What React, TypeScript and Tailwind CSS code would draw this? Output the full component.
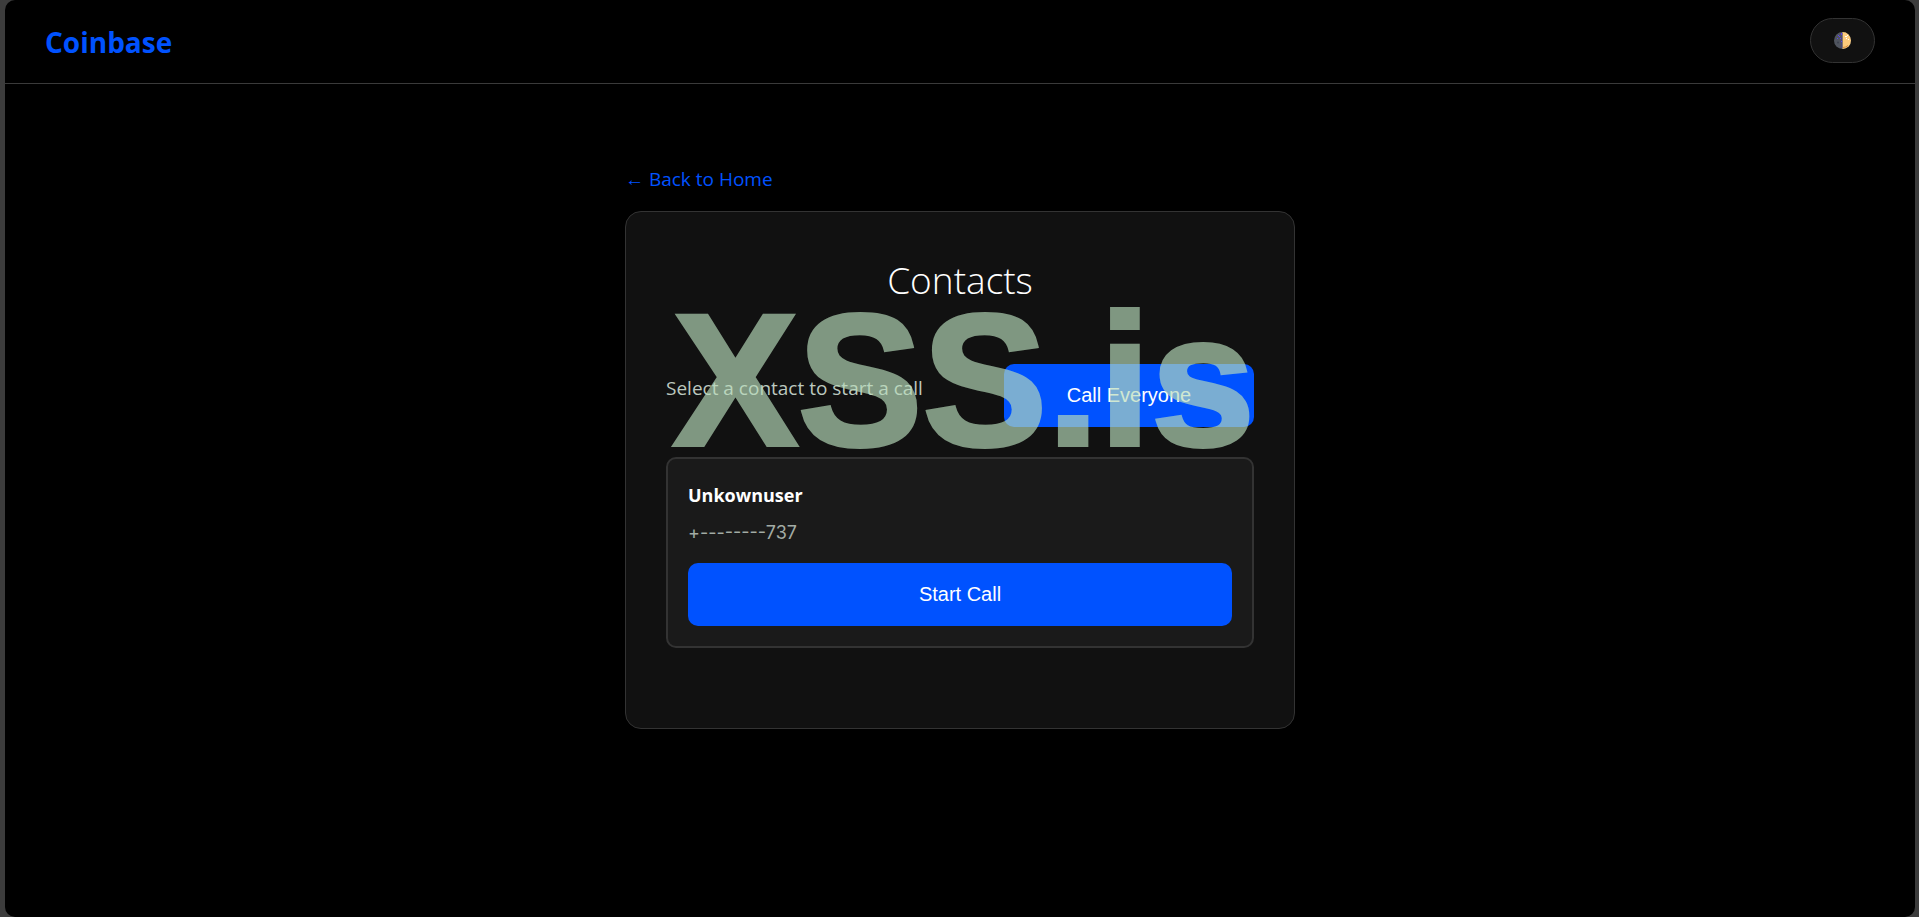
import { useState } from 'react'

type Contact = {
  id: number
  name: string
  phone: string
}

const contacts: Contact[] = [
  { id: 1, name: 'Unkownuser', phone: '+--------737' }
]

const buttonClass =
  "h-[63px] rounded-[10px] bg-[#0052ff] pb-0.5 font-['Liberation_Sans',sans-serif] text-xl text-white hover:bg-[#0045d8] cursor-pointer"

function HalfMoon() {
  return (
    <svg width="17" height="17" viewBox="0 0 17 17" aria-hidden="true">
      <circle cx="8.5" cy="8.5" r="8.5" fill="#50555f" />
      <path d="M8.5 0a8.5 8.5 0 0 1 0 17z" fill="#fdcb7b" />
      <path d="M6.5 1h2v15h-2z" fill="#4a4a7c" opacity="0.7" />
      <path d="M7 1h1v2H7zM5 4h1v1H5zM3 6h1v1H3zM6 6h1v1H6zM7 9h1v1H7zM4 3h1v1H4z" fill="#5a3ff0" />
      <circle cx="4" cy="10.5" r="1" fill="#3d4250" />
      <path d="M11 4h2v1h-2zM12 6h1v1h-1zM14 7h1v1h-1zM13 3h1v1h-1z" fill="#ffffff" />
      <path d="M9 15.500a7.500 7.500 0 0 0 5-2" stroke="#d98d3c" fill="none" />
    </svg>
  )
}

function Header({ onToggle }: { onToggle: () => void }) {
  return (
    <header className="flex h-[84px] items-center justify-between border-b border-[#3a3a3a] px-10 pb-0.5">
      <a href="#" className="pt-0.5 text-[28px] leading-10 font-bold text-[#0052ff]">
        Coinbase
      </a>
      <button
        type="button"
        aria-label="Toggle theme"
        onClick={onToggle}
        className="flex h-[45px] w-[65px] cursor-pointer items-center justify-center rounded-full border border-[#333] bg-[#111]"
      >
        <HalfMoon />
      </button>
    </header>
  )
}

function ContactCard({ contact }: { contact: Contact }) {
  return (
    <li className="rounded-[10px] border-2 border-[#333] bg-[#1a1a1a] p-5">
      <h2 className="text-lg leading-8 font-bold">{contact.name}</h2>
      <p className="mt-1.5 font-['Inter',sans-serif] text-lg leading-8 text-[#a3aca5]">{contact.phone}</p>
      <button type="button" className={`mt-3.5 w-full ${buttonClass}`}>
        Start Call
      </button>
    </li>
  )
}

export default function App() {
  const [, setDark] = useState(true)

  return (
    <div className="min-h-screen bg-[#3c3c3c] pr-1 pl-[5px] font-['Open_Sans','Noto_Sans',sans-serif] text-white">
      <div className="min-h-screen rounded-[10px] bg-black">
        <Header onToggle={() => setDark((d) => !d)} />

        <main className="mx-auto max-w-[672px] px-px pt-[79px] pb-10">
          <a href="#" className="block text-[19px] leading-8 text-[#0052ff]">
            ← Back to Home
          </a>

          <section className="relative mt-4 rounded-2xl border border-[#333] bg-[#111] px-10 pt-10 pb-20">
            <h1 className="text-center text-[37px] leading-[56px] font-light">Contacts</h1>

            <div className="mt-14 flex items-start justify-between">
              <p className="mt-2 text-[19px] leading-8 text-[#bcc8bf]">Select a contact to start a call</p>
              <button type="button" className={`w-[250px] ${buttonClass}`}>
                Call Everyone
              </button>
            </div>

            <ul className="mt-[30px]">
              {contacts.map((contact) => (
                <ContactCard key={contact.id} contact={contact} />
              ))}
            </ul>

            {/* Watermark */}
            <div
              aria-hidden="true"
              className="pointer-events-none absolute inset-x-0 top-[74px] pl-2 text-center font-['Liberation_Sans',sans-serif] text-[187px] leading-[190px] font-bold whitespace-nowrap text-[#b9ddbc] opacity-66 select-none [-webkit-text-stroke:4px_#b9ddbc]"
            >
              XSS.is
            </div>
          </section>
        </main>
      </div>
    </div>
  )
}
